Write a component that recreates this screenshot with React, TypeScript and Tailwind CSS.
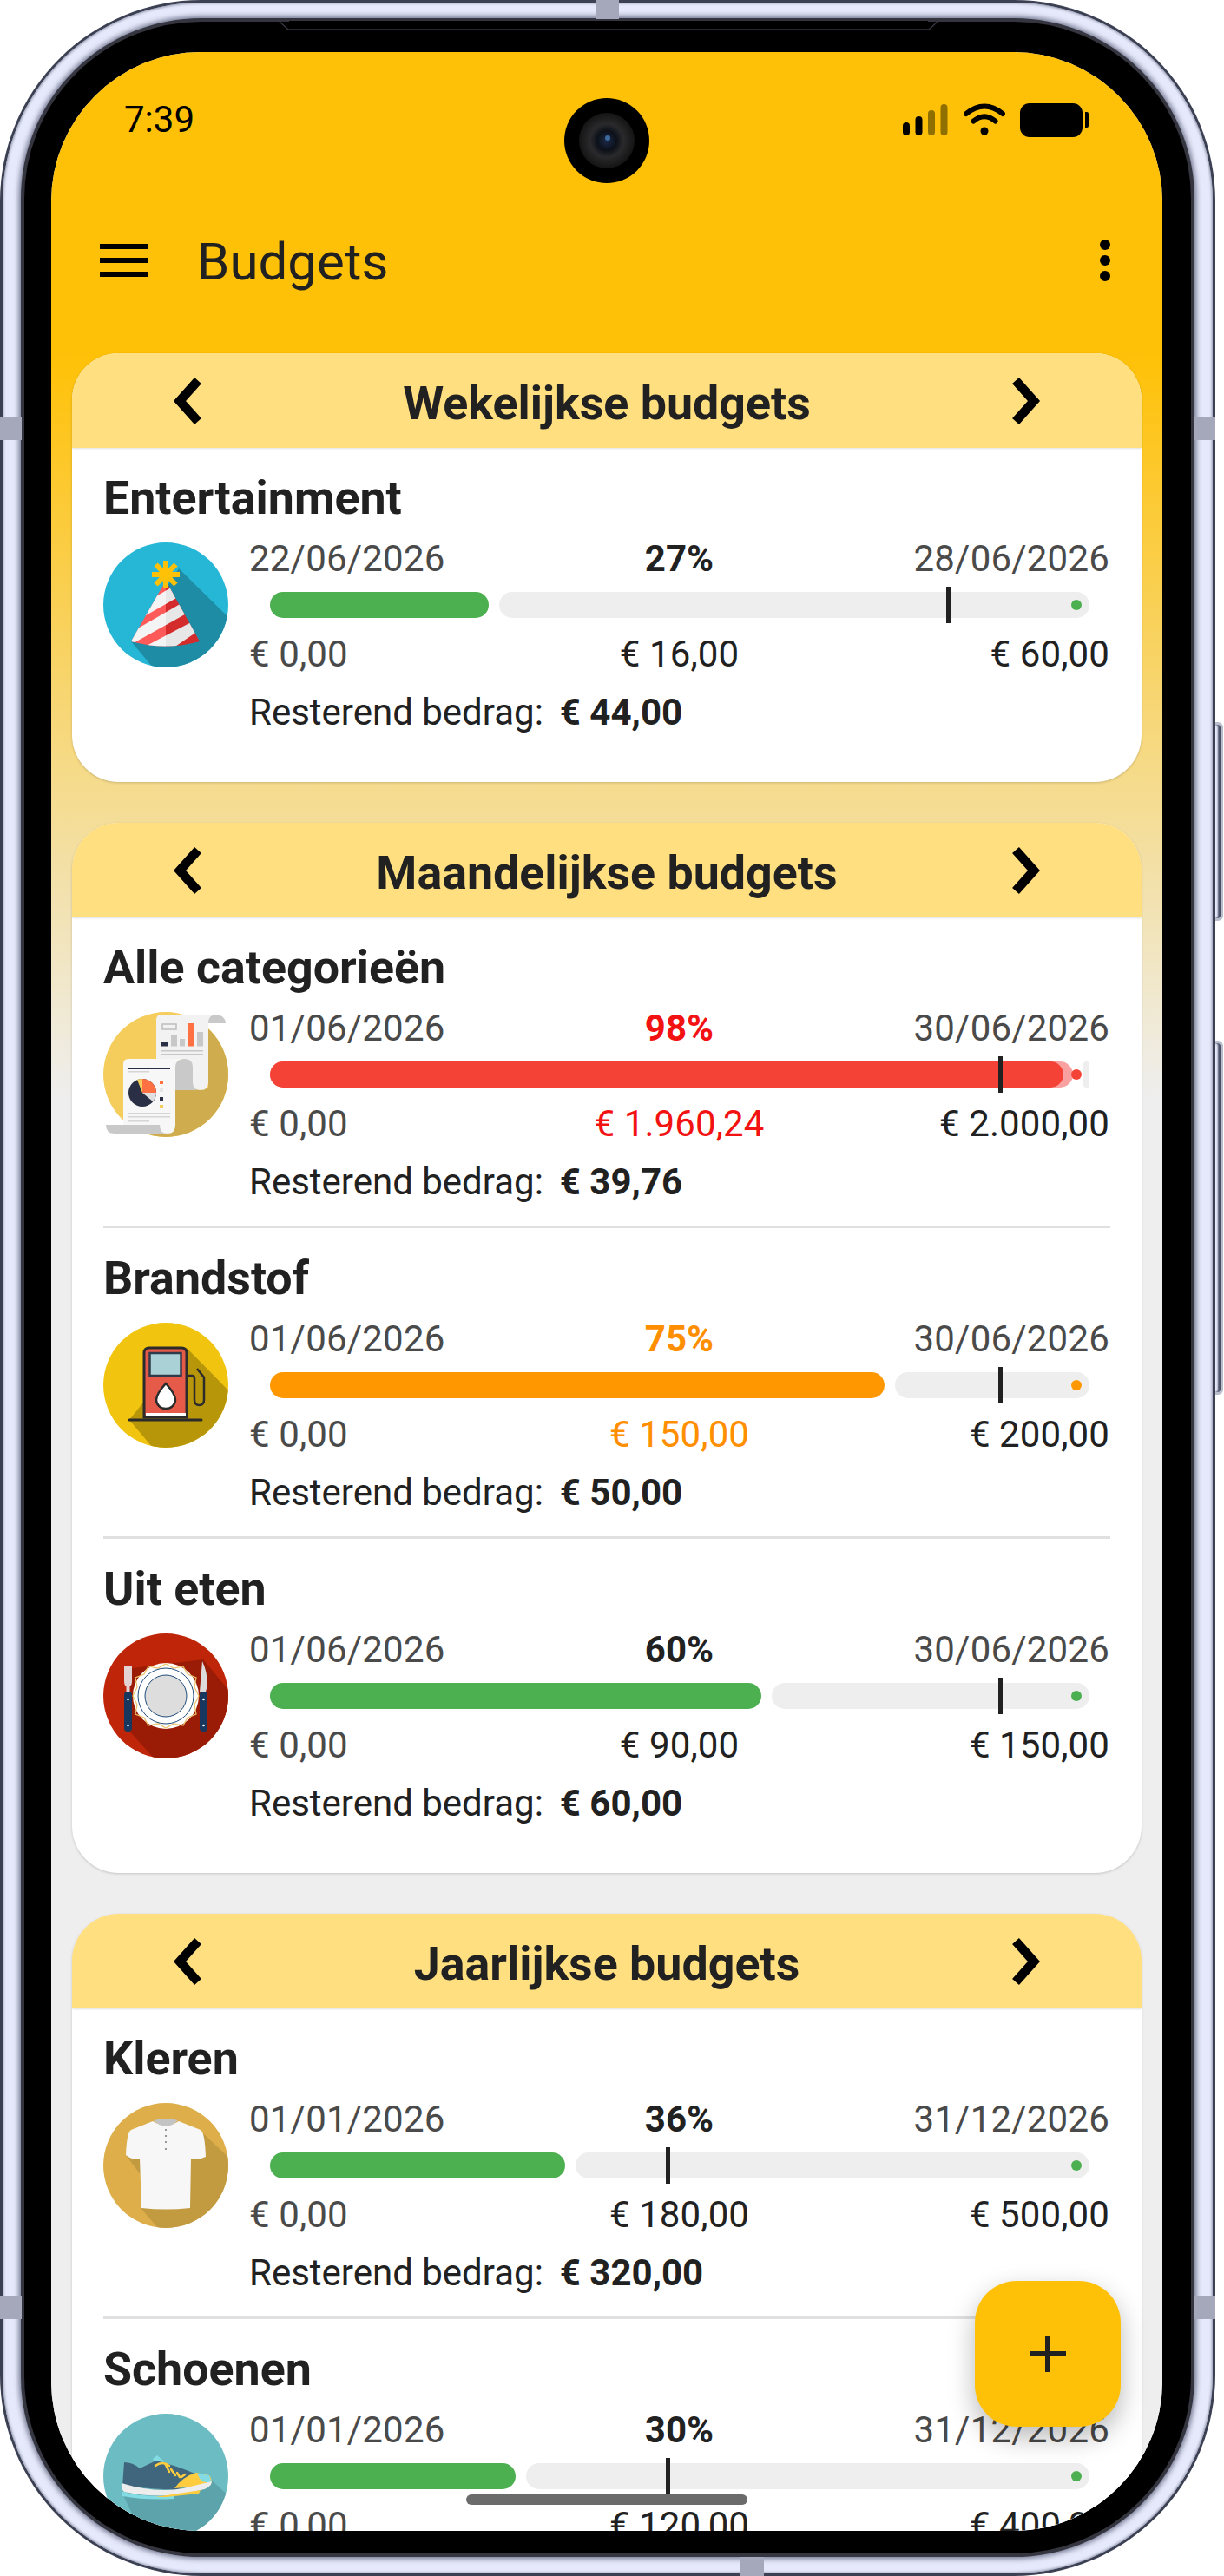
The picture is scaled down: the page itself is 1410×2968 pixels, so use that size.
import React from 'react';

type Tone = 'green' | 'orange' | 'red';

interface Budget {
  name: string;
  from: string;
  to: string;
  pct: number;
  spent: string;
  limit: string;
  left: string;
  tone: Tone;
  marker: number;
  icon: React.ReactNode;
}

const Disc = ({ id, fill, shade, shadeColor, children }: { id: string; fill: string; shade?: string; shadeColor?: string; children: React.ReactNode }) => (
  <svg width="144" height="144" viewBox="0 0 144 144" className="shrink-0 overflow-visible">
    <defs>
      <clipPath id={id}>
        <circle cx="72" cy="72" r="72" />
      </clipPath>
    </defs>
    <circle cx="72" cy="72" r="72" fill={fill} />
    {shade && <polygon points={shade} fill={shadeColor} clipPath={`url(#${id})`} />}
    {children}
  </svg>
);

const PartyIcon = () => (
  <Disc id="party" fill="#27B7D6" shade="87,30 150,92 150,150 62,150 32,114" shadeColor="#1E8CA4">
    <defs>
      <clipPath id="hat">
        <path d="M72 44 L111 114 Q72 125 32 114 Z" />
      </clipPath>
    </defs>
    <g clipPath="url(#hat)">
      <rect x="20" y="40" width="52" height="90" fill="#FF5A5A" />
      <rect x="72" y="40" width="52" height="90" fill="#E02F2F" />
      <g fill="#F4F4F4">
        <polygon points="30,80 92,44 100,55 30,95" />
        <polygon points="24,108 104,62 110,74 24,122" />
        <polygon points="44,122 120,82 124,92 68,130" />
      </g>
      <rect x="72" y="40" width="52" height="90" fill="rgba(0,0,0,0.05)" />
    </g>
    <g stroke="#FFC107" strokeWidth="6" strokeLinecap="butt">
      <line x1="72" y1="21" x2="72" y2="53" />
      <line x1="56" y1="37" x2="88" y2="37" />
      <line x1="60.5" y1="25.5" x2="83.5" y2="48.5" />
      <line x1="83.5" y1="25.5" x2="60.5" y2="48.5" />
    </g>
  </Disc>
);

const ReportIcon = () => (
  <Disc id="report" fill="#F5CD5C">
    <polygon points="121,0 150,0 150,150 50,150 83,88 121,88" fill="#CFAD4F" clipPath="url(#report)" />
    <path d="M121 3 h9 a11 10 0 0 1 11 10 h-20 Z" fill="#C9C9C9" />
    <path d="M83 60 q0 -6 10 -6 h14 v36 h-24 Z" fill="#C9C9C9" />
    <path d="M67 3 h63 q-9 0 -9 10 v68 q0 9 -9 9 q-9 0 -9 -9 v-18 q0 -9 -10 -9 h-32 v-45 q0 -6 6 -6 Z" fill="#F2F2F2" />
    <rect x="68" y="14" width="16" height="6" fill="none" stroke="#BDBDBD" strokeWidth="1.5" />
    <rect x="67" y="34" width="7" height="5.5" fill="#2A2F45" />
    <rect x="78" y="26" width="7" height="13.5" fill="#C8C8C8" />
    <rect x="88" y="31" width="6" height="8.5" fill="#C8C8C8" />
    <rect x="98" y="13" width="7" height="26.5" fill="#FF7043" />
    <rect x="108" y="23" width="7" height="16.5" fill="#C8C8C8" />
    <rect x="67" y="44" width="48" height="1.5" fill="#C8C8C8" />
    <rect x="67" y="48" width="48" height="1.5" fill="#C8C8C8" />
    <path d="M3 130 h62 q2 10 10 10 h-62 q-10 0 -10 -10 Z" fill="#C9C9C9" />
    <path d="M29 54 h64 q-10 0 -10 10 v66 q0 10 -9 10 q-9 0 -9 -10 h-42 v-70 q0 -6 6 -6 Z" fill="#F7F7F7" />
    <rect x="29" y="64" width="48" height="2" fill="#2A2F45" />
    <rect x="29" y="68" width="24" height="1.5" fill="#D5D5D5" />
    <circle cx="45" cy="93" r="16" fill="#2A2F45" />
    <path d="M45 93 V77 A16 16 0 0 1 61 93 Z" fill="#FF7043" />
    <path d="M45 93 L61 93 A16 16 0 0 1 57 103 Z" fill="#E0E0E0" />
    <path d="M45 93 L39 78 A16 16 0 0 1 45 77 Z" fill="#F5CD5C" />
    <rect x="65" y="79" width="4" height="4" fill="#FF7043" />
    <rect x="65" y="88" width="4" height="4" fill="#E6E6E6" />
    <rect x="65" y="98" width="4" height="4" fill="#2A2F45" />
    <rect x="65" y="107" width="4" height="4" fill="#F5CD5C" />
    <rect x="29" y="116" width="48" height="1.5" fill="#D5D5D5" />
    <rect x="29" y="120" width="48" height="1.5" fill="#D5D5D5" />
    <rect x="29" y="125" width="24" height="1.5" fill="#D5D5D5" />
  </Disc>
);

const FuelIcon = () => (
  <Disc id="fuel" fill="#F1C40F" shade="96,29 150,84 150,150 62,150 30,112" shadeColor="#B89609">
    <path d="M96 61 h6 q3 0 3 3 v25 q0 6 5.500 6 q5.500 0 5.500 -6 v-26 l-8 -10" fill="none" stroke="#2B2B2B" strokeWidth="2.5" />
    <path d="M47 109 V35 q0 -6 6 -6 h37 q6 0 6 6 v74 Z" fill="#E55A48" stroke="#2B2B2B" strokeWidth="3" />
    <rect x="53.500" y="35" width="36" height="26" fill="#A9D1D6" stroke="#2F3A4A" strokeWidth="2.500" />
    <path d="M72 70 q11 12 11 19 a11 10 0 0 1 -22 0 q0 -7 11 -19 Z" fill="#fff" stroke="#2B2B2B" strokeWidth="2.500" />
    <rect x="49" y="104" width="46" height="4" fill="#fff" />
    <line x1="30" y1="112" x2="113" y2="112" stroke="#2B2B2B" strokeWidth="3" strokeLinecap="round" />
  </Disc>
);

const PlateIcon = () => (
  <Disc id="plate" fill="#BF2508" shade="33,40 115,30 150,72 150,150 64,150 26,108" shadeColor="#9B1C06">
    <circle cx="72" cy="72" r="38" fill="#fff" />
    <polygon
      points="72,35 81,40 92,38 97,47 107,51 105,62 110,72 105,82 107,93 97,97 92,106 81,104 72,109 63,104 52,106 47,97 37,93 39,82 34,72 39,62 37,51 47,47 52,38 63,40"
      fill="none"
      stroke="#EBC36A"
      strokeWidth="1.200"
    />
    <circle cx="72" cy="72" r="32" fill="none" stroke="#1F4A7A" strokeWidth="1" />
    <circle cx="72" cy="72" r="24" fill="#DDDDDD" stroke="#1F4A7A" strokeWidth="1" />
    <path d="M24 38 h9 v17 q0 5 -2.500 6 v7 h-4 v-7 q-2.500 -1 -2.500 -6 Z" fill="#E3D3D3" />
    <rect x="24" y="67" width="9" height="46" rx="4" fill="#17375E" />
    <circle cx="28.500" cy="76" r="1.300" fill="#fff" />
    <circle cx="28.500" cy="106" r="1.300" fill="#fff" />
    <path d="M114 32 q6 12 6 28 l-2 7 h-7 Z" fill="#DCDCDC" />
    <rect x="111" y="67" width="9" height="46" rx="4" fill="#17375E" />
    <circle cx="115.500" cy="76" r="1.300" fill="#fff" />
    <circle cx="115.500" cy="106" r="1.300" fill="#fff" />
  </Disc>
);

const ShirtIcon = () => (
  <Disc id="shirt" fill="#DDAE4A" shade="115,35 150,68 150,150 68,150 44,122 44,84 26,60" shadeColor="#C29A40">
    <path
      d="M57 21 Q72 30 87 21 L112 31 Q117 34 118 62 Q110 66 101 64 L100 121 Q72 124 44 121 L42 64 Q33 66 26 60 Q27 34 32 31 Z"
      fill="#F7F7F7"
    />
    <path d="M58 20 Q72 16 86 20 Q72 34 58 20 Z" fill="#C4C4C4" />
    <g fill="#777">
      <circle cx="72" cy="31" r="1" />
      <circle cx="72" cy="38" r="1" />
      <circle cx="72" cy="45" r="1" />
      <circle cx="72" cy="53" r="1" />
    </g>
  </Disc>
);

const ShoeIcon = () => (
  <Disc id="shoe" fill="#6CBCC4" shade="122,74 150,100 150,150 50,150 22,92" shadeColor="#5CA3AB">
    <path d="M57 52 L62 48 L70 55 L62 60 Z" fill="#83DCE4" />
    <path d="M24 56 Q34 56 42 63 L61 54 Q85 60 108 70 L86 88 L22 84 Z" fill="#3F667C" />
    <path d="M82 86 Q92 72 107 68 L122 71 Q126 76 124 82 Z" fill="#FFCC40" />
    <path d="M108 69 L122 71 L125 80 L113 78 Z" fill="#83DCE4" />
    <path d="M21 80 Q60 92 92 86 L125 78 Q124 86 112 88 Q70 100 24 90 Q20 86 21 80 Z" fill="#EDEDED" />
    <path d="M22 90 Q50 97 82 94 L82 98 Q50 100 22 95 Z" fill="#83DCE4" />
    <path d="M60 96 L112 88 L110 92 L72 96 Z" fill="#FFCC40" />
    <g stroke="#FFCC40" strokeWidth="2.500" fill="none" strokeLinecap="round">
      <path d="M60 60 Q68 54 76 60" />
      <path d="M72 59 L76 67" />
      <path d="M78 64 L83 71" />
      <path d="M85 68 L88 73" />
      <path d="M90 73 L94 70" />
    </g>
  </Disc>
);

const toneBar: Record<Tone, string> = {
  green: 'bg-[#4CAF50]',
  orange: 'bg-[#FF9800]',
  red: 'bg-[#F9A0A0]',
};

const toneText: Record<Tone, string> = {
  green: 'text-[#212121]',
  orange: 'text-[#FF8F00]',
  red: 'text-[#F21212]',
};

const toneDot: Record<Tone, string> = {
  green: 'bg-[#4CAF50]',
  orange: 'bg-[#FF9800]',
  red: 'bg-[#F44336]',
};

const groups: { title: string; items: Budget[] }[] = [
  {
    title: 'Wekelijkse budgets',
    items: [
      { name: 'Entertainment', from: '22/06/2026', to: '28/06/2026', pct: 26.67, spent: '€ 16,00', limit: '€ 60,00', left: '€ 44,00', tone: 'green', marker: 82.55, icon: <PartyIcon /> },
    ],
  },
  {
    title: 'Maandelijkse budgets',
    items: [
      { name: 'Alle categorieën', from: '01/06/2026', to: '30/06/2026', pct: 98, spent: '€ 1.960,24', limit: '€ 2.000,00', left: '€ 39,76', tone: 'red', marker: 88.9, icon: <ReportIcon /> },
      { name: 'Brandstof', from: '01/06/2026', to: '30/06/2026', pct: 75, spent: '€ 150,00', limit: '€ 200,00', left: '€ 50,00', tone: 'orange', marker: 88.9, icon: <FuelIcon /> },
      { name: 'Uit eten', from: '01/06/2026', to: '30/06/2026', pct: 60, spent: '€ 90,00', limit: '€ 150,00', left: '€ 60,00', tone: 'green', marker: 88.9, icon: <PlateIcon /> },
    ],
  },
  {
    title: 'Jaarlijkse budgets',
    items: [
      { name: 'Kleren', from: '01/01/2026', to: '31/12/2026', pct: 36, spent: '€ 180,00', limit: '€ 500,00', left: '€ 320,00', tone: 'green', marker: 48.35, icon: <ShirtIcon /> },
      { name: 'Schoenen', from: '01/01/2026', to: '31/12/2026', pct: 30, spent: '€ 120,00', limit: '€ 400,00', left: '€ 280,00', tone: 'green', marker: 48.35, icon: <ShoeIcon /> },
    ],
  },
];

const Chevron = ({ flip }: { flip?: boolean }) => (
  <svg width="34" height="54" viewBox="0 0 34 54" className={flip ? 'rotate-180' : ''}>
    <polyline points="29,3.500 8,27 29,50.500" fill="none" stroke="#000" strokeWidth="10.500" />
  </svg>
);

const Progress = ({ item }: { item: Budget }) => (
  <div className="relative ml-[24px] mr-[24px] mt-[14px] flex h-[30px] gap-[12px]">
    <div className={`relative h-full rounded-[15px] ${toneBar[item.tone]}`} style={{ width: `${item.pct}%` }}>
      {item.tone === 'red' && <div className="absolute inset-y-0 left-0 right-[11px] rounded-[15px] bg-[#F44336]" />}
    </div>
    <div className="h-full flex-1 rounded-[15px] bg-[#EEEEEE]" />
    <div className={`absolute right-[9px] top-[9px] h-[12px] w-[12px] rounded-full ${toneDot[item.tone]}`} />
    <div className="absolute top-[-6px] h-[42px] w-[5px] bg-[#212121]" style={{ left: `${item.marker}%` }} />
  </div>
);

const BudgetRow = ({ item, last }: { item: Budget; last: boolean }) => (
  <div className="px-[36px]">
    <div className="pt-[26px] pb-[26px]">
      <div className="text-[53.75px] font-bold leading-[64px] text-[#212121]">{item.name}</div>
      <div className="mt-[14px] flex gap-[24px]">
        <div className="mt-[5px]">{item.icon}</div>
        <div className="min-w-0 flex-1 text-[42px] leading-[48px]">
          <div className="grid grid-cols-3 pr-[1px] tracking-[0.2px]">
            <span className="text-[#4A4A4A]">{item.from}</span>
            <span className={`text-center font-bold tracking-normal ${toneText[item.tone]}`}>{Math.round(item.pct)}%</span>
            <span className="text-right text-[#4A4A4A]">{item.to}</span>
          </div>
          <Progress item={item} />
          <div className="mt-[18px] grid grid-cols-[1fr_auto_1fr] pr-[1px] tracking-[0.1px]">
            <span className="text-[#4A4A4A]">€ 0,00</span>
            <span className={`text-center ${toneText[item.tone]}`}>{item.spent}</span>
            <span className="text-right text-[#212121]">{item.limit}</span>
          </div>
          <div className="mt-[19px] flex gap-[19px] text-[#212121]">
            <span>Resterend bedrag:</span>
            <span className="font-bold">{item.left}</span>
          </div>
        </div>
      </div>
    </div>
    {!last && <div className="h-[3px] bg-[#E0E0E0]" />}
  </div>
);

const BudgetCard = ({ title, items }: { title: string; items: Budget[] }) => (
  <section className="overflow-hidden rounded-[54px] bg-white pb-[30px] shadow-[0_1px_3px_rgba(0,0,0,0.18)]">
    <header className="flex h-[109px] items-center justify-between bg-[#FFDF80] px-[116px] shadow-[0_1px_2px_rgba(0,0,0,0.12)]">
      <Chevron />
      <h2 className="pt-[6px] text-[53.75px] font-bold leading-[64px] text-[#212121]">{title}</h2>
      <Chevron flip />
    </header>
    {items.map((item, i) => (
      <BudgetRow key={item.name} item={item} last={i === items.length - 1} />
    ))}
  </section>
);

const StatusIcons = () => (
  <div className="flex items-center">
    <svg width="56" height="40" viewBox="0 0 56 40">
      <rect x="0" y="23" width="8" height="15" rx="4" fill="#000" />
      <rect x="14.500" y="16" width="8" height="22" rx="4" fill="#000" />
      <rect x="29" y="9" width="8" height="29" rx="4" fill="#8F6F00" />
      <rect x="43.500" y="2" width="8" height="36" rx="4" fill="#8F6F00" />
    </svg>
    <svg width="48" height="40" viewBox="0 0 48 40" className="ml-[14px]">
      <path d="M3 13 Q24 -4 45 13" fill="none" stroke="#000" strokeWidth="6" strokeLinecap="round" />
      <path d="M11.500 21.500 Q24 11 36.500 21.500" fill="none" stroke="#000" strokeWidth="6" strokeLinecap="round" />
      <circle cx="24" cy="33" r="4.500" fill="#000" />
    </svg>
    <div className="ml-[17px] h-[39px] w-[72px] rounded-[11px] bg-black" />
    <div className="ml-[3px] h-[18px] w-[4px] rounded-r-[2px] bg-black" />
  </div>
);

const Camera = () => (
  <svg width="98" height="98" viewBox="0 0 98 98" className="absolute left-[591px] top-[53px]">
    <defs>
      <radialGradient id="lens">
        <stop offset="0" stopColor="#1b2a4a" />
        <stop offset="0.35" stopColor="#0c1018" />
        <stop offset="0.6" stopColor="#2a2a2c" />
        <stop offset="1" stopColor="#141414" />
      </radialGradient>
    </defs>
    <circle cx="49" cy="49" r="49" fill="#000" />
    <circle cx="49" cy="49" r="32" fill="url(#lens)" />
    <circle cx="50" cy="46" r="3" fill="#3d6a9c" />
  </svg>
);

const AppBar = () => (
  <div className="bg-[#FFC107] pt-[54px] pb-[23px]">
    <div className="flex h-[48px] items-center justify-between pl-[84px] pr-[85px] text-[42px] leading-[48px] text-black">
      <span>7:39</span>
      <StatusIcons />
    </div>
    <div className="mt-[54px] flex h-[168px] items-center pl-[56px] pr-[60px]">
      <div className="flex w-[56px] flex-col gap-[10px]">
        <div className="h-[6px] bg-black" />
        <div className="h-[6px] bg-black" />
        <div className="h-[6px] bg-black" />
      </div>
      <h1 className="ml-[56px] flex-1 pt-[4px] text-[60px] leading-[72px] text-[#212121]">Budgets</h1>
      <div className="flex flex-col gap-[6px]">
        <div className="h-[12px] w-[12px] rounded-full bg-black" />
        <div className="h-[12px] w-[12px] rounded-full bg-black" />
        <div className="h-[12px] w-[12px] rounded-full bg-black" />
      </div>
    </div>
  </div>
);

const Fab = () => (
  <button className="absolute left-[1064px] top-[2568px] flex h-[168px] w-[168px] items-center justify-center rounded-[48px] bg-[#FFC107] shadow-[0_12px_30px_rgba(0,0,0,0.28)]">
    <svg width="42" height="42" viewBox="0 0 42 42">
      <rect x="18" y="0" width="6" height="42" fill="#212121" />
      <rect x="0" y="18" width="42" height="6" fill="#212121" />
    </svg>
  </button>
);

// phone shell: metal band, black bezel, antenna cuts and side keys
const PhoneShell = ({ children }: { children: React.ReactNode }) => (
  <div className="relative h-[2968px] w-[1410px] overflow-hidden bg-white">
    <div className="absolute right-[1px] top-[832px] h-[229px] w-[12px] rounded-r-[6px] border-y-[3px] border-r-[3px] border-[#B9BDCC] bg-[#E6E9FB] shadow-[inset_-3px_0_2px_#4A4F66]" />
    <div className="absolute right-[1px] top-[1199px] h-[408px] w-[12px] rounded-r-[6px] border-y-[3px] border-r-[3px] border-[#B9BDCC] bg-[#E6E9FB] shadow-[inset_-3px_0_2px_#4A4F66]" />
    <div className="relative h-[2968px] w-[1400px] rounded-[232px] bg-[#3B4053] p-[3px]">
      <div className="h-full rounded-[229px] bg-[#E6E9FB] px-[21px] pb-[19px] pt-[18px] shadow-[inset_0_0_3px_1px_#9095AC]">
        <div className="h-full rounded-[208px] border-[4px] border-[#34353F] bg-black pb-[26px] pl-[31px] pr-[33px] pt-[35px] shadow-[0_0_6px_2px_#6A6F88]">
          {children}
        </div>
      </div>
      <div className="absolute left-0 top-[480px] h-[27px] w-[25px] bg-[#A4A8BA]" />
      <div className="absolute left-0 top-[2645px] h-[27px] w-[25px] bg-[#A4A8BA]" />
      <div className="absolute right-0 top-[480px] h-[27px] w-[25px] bg-[#A4A8BA]" />
      <div className="absolute right-0 top-[2645px] h-[27px] w-[25px] bg-[#A4A8BA]" />
      <div className="absolute left-[687px] top-0 h-[22px] w-[26px] bg-[#A4A8BA]" />
      <div className="absolute left-[852px] bottom-0 h-[22px] w-[28px] bg-[#A4A8BA]" />
      <svg width="800" height="12" viewBox="0 0 800 12" className="absolute left-[300px] top-[24px]">
        <polyline points="22,1 32,10 770,10 780,1" fill="none" stroke="#34353F" strokeWidth="1.500" />
        <rect x="33" y="0" width="736" height="9" fill="#000" />
      </svg>
    </div>
  </div>
);

export default function App() {
  return (
    <div className="font-['Roboto',sans-serif]">
      <PhoneShell>
        <div className="relative h-full overflow-hidden rounded-[172px] bg-[#EEEEEE]">
          <AppBar />
          <main className="flex flex-col gap-[47px] bg-[linear-gradient(#FFC107_0,#EEEEEE_858px)] px-[24px]">
            {groups.map((g) => (
              <BudgetCard key={g.title} title={g.title} items={g.items} />
            ))}
          </main>
          <Camera />
          <Fab />
          <div className="absolute left-[478px] top-[2814px] h-[12px] w-[324px] rounded-[6px] bg-[#6B6B6B]" />
        </div>
      </PhoneShell>
    </div>
  );
}
